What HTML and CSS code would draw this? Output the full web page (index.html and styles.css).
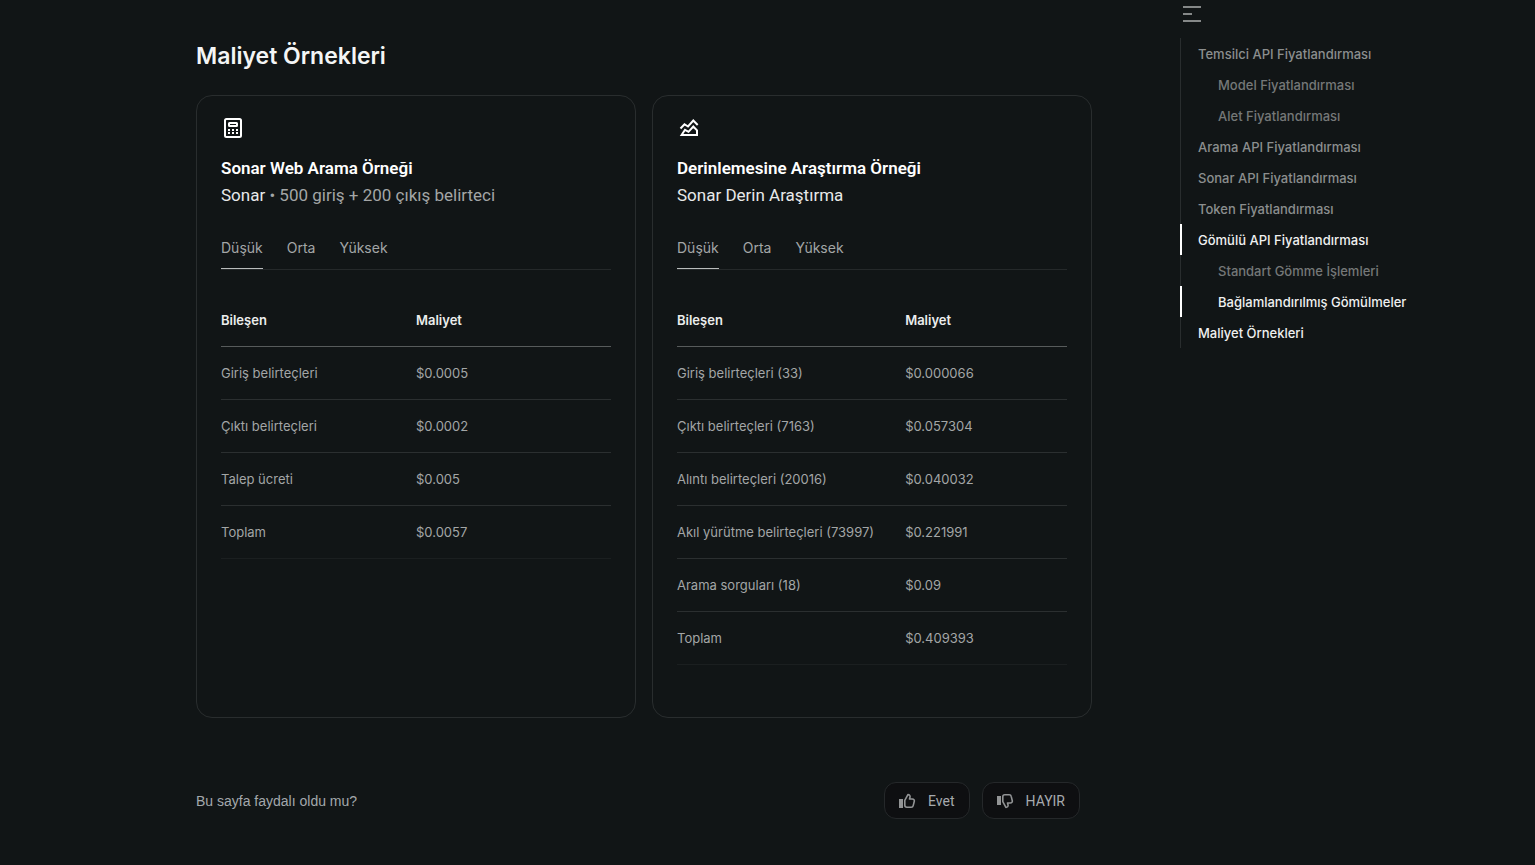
FILE: index.html
```html
<!DOCTYPE html>
<html lang="tr">
<head>
<meta charset="utf-8">
<meta name="viewport" content="width=device-width, initial-scale=1">
<title>Maliyet Örnekleri</title>
<link rel="stylesheet" href="styles.css">
</head>
<body>
<div class="page">
  <main class="content">
    <h2 class="heading">Maliyet Örnekleri</h2>
    <div class="cards">
      <section class="card">
        <svg class="card-icon" viewBox="0 0 24 24" aria-hidden="true">
          <rect x="4" y="3" width="16" height="18" rx="1.5" fill="none" stroke="currentColor" stroke-width="2"/>
          <rect x="8" y="7" width="8" height="3" rx="0.5" fill="none" stroke="currentColor" stroke-width="2"/>
          <path fill="currentColor" d="M7 13h2v2H7zM11 13h2v2h-2zM15 13h2v2h-2zM7 16h2v2H7zM11 16h2v2h-2zM15 16h2v2h-2z"/>
        </svg>
        <h3 class="card-title">Sonar Web Arama Örneği</h3>
        <p class="card-sub"><strong>Sonar</strong> • 500 giriş + 200 çıkış belirteci</p>
        <div class="tabs" role="tablist">
          <button class="tab tab-active" type="button" role="tab" aria-selected="true">Düşük</button>
          <button class="tab" type="button" role="tab" aria-selected="false">Orta</button>
          <button class="tab" type="button" role="tab" aria-selected="false">Yüksek</button>
        </div>
        <table class="costs">
          <thead><tr><th scope="col">Bileşen</th><th scope="col">Maliyet</th></tr></thead>
          <tbody>
            <tr><td>Giriş belirteçleri</td><td>$0.0005</td></tr>
            <tr><td>Çıktı belirteçleri</td><td>$0.0002</td></tr>
            <tr><td>Talep ücreti</td><td>$0.005</td></tr>
            <tr><td>Toplam</td><td>$0.0057</td></tr>
          </tbody>
        </table>
      </section>
      <section class="card">
        <svg class="card-icon" viewBox="0 0 24 24" aria-hidden="true">
          <g fill="none" stroke="currentColor" stroke-width="2" stroke-linejoin="miter">
            <path d="M3.5 12.5L7.5 8.2L11 10.5L16.3 4.5L20.7 9"/>
            <path d="M4.6 19L8 13.8L11.5 15.8L16.3 10.5L20 14.3V19Z"/>
          </g>
        </svg>
        <h3 class="card-title">Derinlemesine Araştırma Örneği</h3>
        <p class="card-sub"><strong>Sonar Derin Araştırma</strong></p>
        <div class="tabs" role="tablist">
          <button class="tab tab-active" type="button" role="tab" aria-selected="true">Düşük</button>
          <button class="tab" type="button" role="tab" aria-selected="false">Orta</button>
          <button class="tab" type="button" role="tab" aria-selected="false">Yüksek</button>
        </div>
        <table class="costs costs-wide">
          <thead><tr><th scope="col">Bileşen</th><th scope="col">Maliyet</th></tr></thead>
          <tbody>
            <tr><td>Giriş belirteçleri (33)</td><td>$0.000066</td></tr>
            <tr><td>Çıktı belirteçleri (7163)</td><td>$0.057304</td></tr>
            <tr><td>Alıntı belirteçleri (20016)</td><td>$0.040032</td></tr>
            <tr><td>Akıl yürütme belirteçleri (73997)</td><td>$0.221991</td></tr>
            <tr><td>Arama sorguları (18)</td><td>$0.09</td></tr>
            <tr><td>Toplam</td><td>$0.409393</td></tr>
          </tbody>
        </table>
      </section>
    </div>
    <div class="feedback">
      <p class="feedback-text">Bu sayfa faydalı oldu mu?</p>
      <div class="feedback-actions">
        <button class="vote" type="button">
          <svg class="vote-icon" viewBox="0 0 18 18" aria-hidden="true">
            <path fill="currentColor" d="M0 7h4v9H0z"/>
            <path fill="none" stroke="currentColor" stroke-width="1.6" stroke-linejoin="round" d="M5.8 8.4L8.9 2.6C10.6 2.6 11.4 3.8 11 5.2L10.5 7H13.4C14.8 7 15.6 8 15.3 9.2L14.2 13.6C14 14.6 13.2 15.2 12.2 15.2H7.8C6.6 15.2 5.8 14.4 5.8 13.3Z"/>
          </svg>
          <span>Evet</span>
        </button>
        <button class="vote" type="button">
          <svg class="vote-icon" viewBox="0 0 18 18" aria-hidden="true">
            <path fill="currentColor" d="M0 4h4v9H0z"/>
            <path fill="none" stroke="currentColor" stroke-width="1.6" stroke-linejoin="round" d="M5.8 9.6L8.9 15.4C10.6 15.4 11.4 14.2 11 12.8L10.5 11H13.4C14.8 11 15.6 10 15.3 8.8L14.2 4.4C14 3.4 13.2 2.8 12.2 2.8H7.8C6.6 2.8 5.8 3.6 5.8 4.7Z"/>
          </svg>
          <span>HAYIR</span>
        </button>
      </div>
    </div>
  </main>
  <aside class="toc">
    <button class="toc-toggle" type="button" aria-label="Bu sayfada">
      <svg class="toc-icon" viewBox="0 0 24 18" aria-hidden="true">
        <path fill="currentColor" d="M3 0h18v2H3zM3 7h9v2H3zM3 14h18v2H3z"/>
      </svg>
    </button>
    <nav class="toc-list" aria-label="İçindekiler">
      <a class="toc-link" href="#agent">Temsilci API Fiyatlandırması</a>
      <a class="toc-link toc-sub" href="#model">Model Fiyatlandırması</a>
      <a class="toc-link toc-sub" href="#tool">Alet Fiyatlandırması</a>
      <a class="toc-link" href="#search">Arama API Fiyatlandırması</a>
      <a class="toc-link" href="#sonar">Sonar API Fiyatlandırması</a>
      <a class="toc-link" href="#token">Token Fiyatlandırması</a>
      <a class="toc-link toc-on toc-marked" href="#embed">Gömülü API Fiyatlandırması</a>
      <a class="toc-link toc-sub" href="#standard">Standart Gömme İşlemleri</a>
      <a class="toc-link toc-sub toc-on toc-marked" href="#context">Bağlamlandırılmış Gömülmeler</a>
      <a class="toc-link toc-on" href="#examples">Maliyet Örnekleri</a>
    </nav>
  </aside>
</div>
</body>
</html>
```
FILE: styles.css
```css
* { box-sizing: border-box; }

body {
  margin: 0;
  min-height: 100vh;
  background: #111516;
  color: #a3a6a6;
  font-family: Inter, Roboto, Arial, sans-serif;
  font-size: 14px;
}

h2, h3, p { margin: 0; }

button {
  margin: 0;
  padding: 0;
  border: 0;
  background: none;
  color: inherit;
  font: inherit;
  cursor: pointer;
}

.page {
  display: flex;
  align-items: flex-start;
  gap: 88px;
  padding: 0 91px 0 196px;
}

.content { flex: 1; min-width: 0; padding-top: 39px; }

.heading {
  color: #f4f5f5;
  font-size: 23px;
  font-weight: 600;
  line-height: 34px;
}

.cards {
  display: grid;
  grid-template-columns: 1fr 1fr;
  gap: 16px;
  margin-top: 22px;
}

.card {
  padding: 20px 24px 52px;
  border: 1px solid #292d2e;
  border-radius: 16px;
}

.card-icon { display: block; width: 24px; height: 24px; color: #fff; }

.card-title, .card-sub { font-family: Roboto, Arial, sans-serif; font-size: 17px; }

.card-title {
  margin-top: 16px;
  color: #fff;
  font-weight: 600;
  line-height: 24px;
}

.card-sub { margin-top: 1px; line-height: 28px; }
.card-sub strong { color: #e8e9e9; font-weight: 400; }

.tabs {
  display: flex;
  gap: 24px;
  margin-top: 24px;
  border-bottom: 1px solid #25292a;
}

.tab { padding: 3px 0 8px; border-bottom: 1px solid transparent; font-size: 14px; line-height: 24px; }
.tab-active { border-bottom-color: #b9bcbc; }

.costs {
  width: 100%;
  margin-top: 24px;
  border-collapse: separate;
  border-spacing: 0;
  table-layout: fixed;
  font-size: 13px;
  line-height: 20px;
  text-align: left;
}

.costs th, .costs td { height: 53px; padding: 0; border-bottom: 1px solid #2b2f30; font-weight: 400; }
.costs th { border-bottom-color: #575b5b; color: #eceded; font-weight: 600; }
.costs tbody tr:last-child td { border-bottom-color: #1b1f20; }
.costs th:first-child { width: 50%; }
.costs-wide th:first-child { width: 58.5%; }

.feedback {
  display: flex;
  align-items: center;
  justify-content: space-between;
  margin-top: 64px;
  padding-right: 12px;
}

.feedback-text {
  color: #a3a8ac;
  font-family: "Liberation Sans", Arial, sans-serif;
  line-height: 20px;
}

.feedback-actions { display: flex; gap: 12px; }

.vote {
  display: flex;
  align-items: center;
  gap: 11px;
  height: 37px;
  padding: 0 14px;
  border: 1px solid #25282a;
  border-radius: 12px;
  background: #0e0f11;
  color: #a6aaae;
  font-family: Roboto, Arial, sans-serif;
}

.vote-icon { width: 18px; height: 18px; color: #929495; }

.toc { width: 264px; padding-top: 6px; }
.toc-toggle { display: block; color: #858888; }
.toc-icon { display: block; width: 24px; height: 18px; }

.toc-list {
  display: flex;
  flex-direction: column;
  margin-top: 14px;
  border-left: 1px solid #292d2e;
}

.toc-link {
  margin-left: -1px;
  padding: 2px 0 0 16px;
  border-left: 2px solid transparent;
  color: #8b8e8e;
  font-size: 13px;
  font-weight: 500;
  line-height: 29px;
  text-decoration: none;
}

.toc-sub { padding-left: 36px; color: #757878; }
.toc-on { color: #eff0f0; }
.toc-marked { border-left-color: #fff; }
```
